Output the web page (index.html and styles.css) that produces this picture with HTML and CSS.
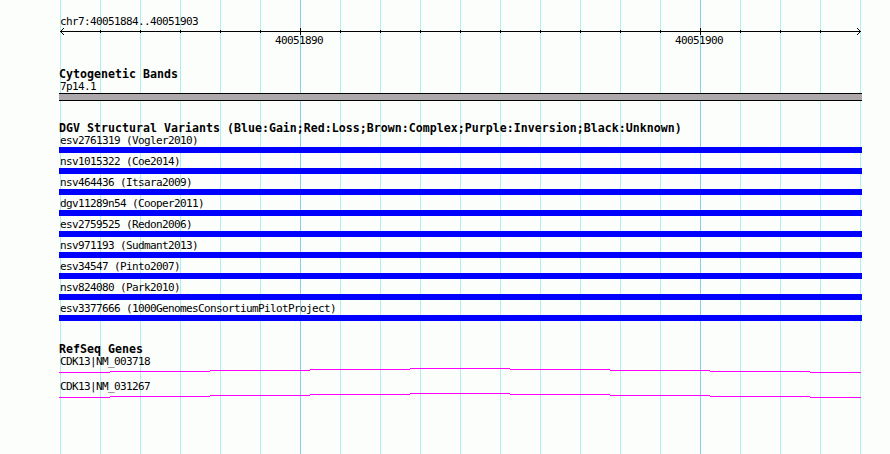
FILE: index.html
```
<!DOCTYPE html>
<html lang="en">
<head>
<meta charset="utf-8">
<title>chr7:40051884..40051903</title>
<link rel="stylesheet" href="styles.css">
</head>
<body>
<main class="browser">
  <section class="ruler">
    <div class="label">chr7:40051884..40051903</div>
    <svg class="axis" width="803" height="7" viewBox="59 28 803 7" shape-rendering="crispEdges">
      <path d="M60 31.5H861M100.5 30v3M140.5 30v3M180.5 30v3M220.5 30v3M260.5 30v3M300.5 28v7M340.5 30v3M380.5 30v3M420.5 30v3M460.5 30v3M500.5 30v3M540.5 30v3M580.5 30v3M620.5 30v3M660.5 30v3M700.5 28v7M740.5 30v3M780.5 30v3M820.5 30v3" stroke="#000"/>
      <path d="M61 30h1v1h-1zM62 29h1v1h-1zM63 28h1v1h-1zM61 32h1v1h-1zM62 33h1v1h-1zM63 34h1v1h-1zM859 30h1v1h-1zM858 29h1v1h-1zM857 28h1v1h-1zM859 32h1v1h-1zM858 33h1v1h-1zM857 34h1v1h-1z"/>
    </svg>
    <div class="numbers"><span>40051890</span><span>40051900</span></div>
  </section>
  <section class="track">
    <h2>Cytogenetic Bands</h2>
    <div class="label">7p14.1</div>
    <div class="band"></div>
  </section>
  <section class="track">
    <h2>DGV Structural Variants (Blue:Gain;Red:Loss;Brown:Complex;Purple:Inversion;Black:Unknown)</h2>
    <div class="variant">esv2761319 (Vogler2010)</div>
    <div class="variant">nsv1015322 (Coe2014)</div>
    <div class="variant">nsv464436 (Itsara2009)</div>
    <div class="variant">dgv11289n54 (Cooper2011)</div>
    <div class="variant">esv2759525 (Redon2006)</div>
    <div class="variant">nsv971193 (Sudmant2013)</div>
    <div class="variant">esv34547 (Pinto2007)</div>
    <div class="variant">nsv824080 (Park2010)</div>
    <div class="variant">esv3377666 (1000GenomesConsortiumPilotProject)</div>
  </section>
  <section class="track genes">
    <h2>RefSeq Genes</h2>
    <div class="gene">
      <div class="label">CDK13|NM_003718</div>
      <svg width="803" height="5" viewBox="59 0 803 5" shape-rendering="crispEdges"><path d="M59 4h51v1h-51zM110 3h100v1h-100zM210 2h100v1h-100zM310 1h100v1h-100zM410 0h100v1h-100zM510 1h100v1h-100zM610 2h100v1h-100zM710 3h100v1h-100zM810 4h51v1h-51z" fill="#f0f"/></svg>
    </div>
    <div class="gene">
      <div class="label">CDK13|NM_031267</div>
      <svg width="803" height="5" viewBox="59 0 803 5" shape-rendering="crispEdges"><path d="M59 4h51v1h-51zM110 3h100v1h-100zM210 2h100v1h-100zM310 1h100v1h-100zM410 0h100v1h-100zM510 1h100v1h-100zM610 2h100v1h-100zM710 3h100v1h-100zM810 4h51v1h-51z" fill="#f0f"/></svg>
    </div>
  </section>
</main>
</body>
</html>
```
FILE: styles.css
```
* { box-sizing: border-box; }

body {
  margin: 0;
  background: #fcfefc;
}

.browser {
  height: 454px;
  padding: 15px 28px 0 59px;
  overflow: hidden;
  color: #000;
  font: 11px/13px "DejaVu Sans Mono", monospace;
  letter-spacing: -0.622px;
  white-space: nowrap;
  background:
    linear-gradient(#87ceeb, #87ceeb) 300px 0 / 1px 100% no-repeat,
    linear-gradient(#87ceeb, #87ceeb) 700px 0 / 1px 100% no-repeat,
    repeating-linear-gradient(90deg, #afeeee 0 1px, transparent 1px 40px) 60px 0 / 801px 100% no-repeat;
}

svg { display: block; }

.ruler { height: 53px; }

.label { height: 13px; padding-left: 1px; }

.numbers {
  display: flex;
  gap: 352px;
  margin-top: -1px;
  padding-left: 216px;
}

.numbers span { width: 48px; }

.track { margin-bottom: 21px; }

.track h2 {
  height: 12px;
  margin: 0;
  font-size: 11.6px;
  font-weight: bold;
  line-height: 13px;
  letter-spacing: 0.016px;
}

.band {
  height: 8px;
  background: #aca8ac;
  border: solid #000;
  border-width: 1px 0;
}

.variant {
  height: 19px;
  padding-left: 1px;
  border-bottom: 6px solid #00f;
}

.variant + .variant { margin-top: 2px; }

.genes { padding-top: 1px; }

.gene + .gene { margin-top: 7px; }
```
